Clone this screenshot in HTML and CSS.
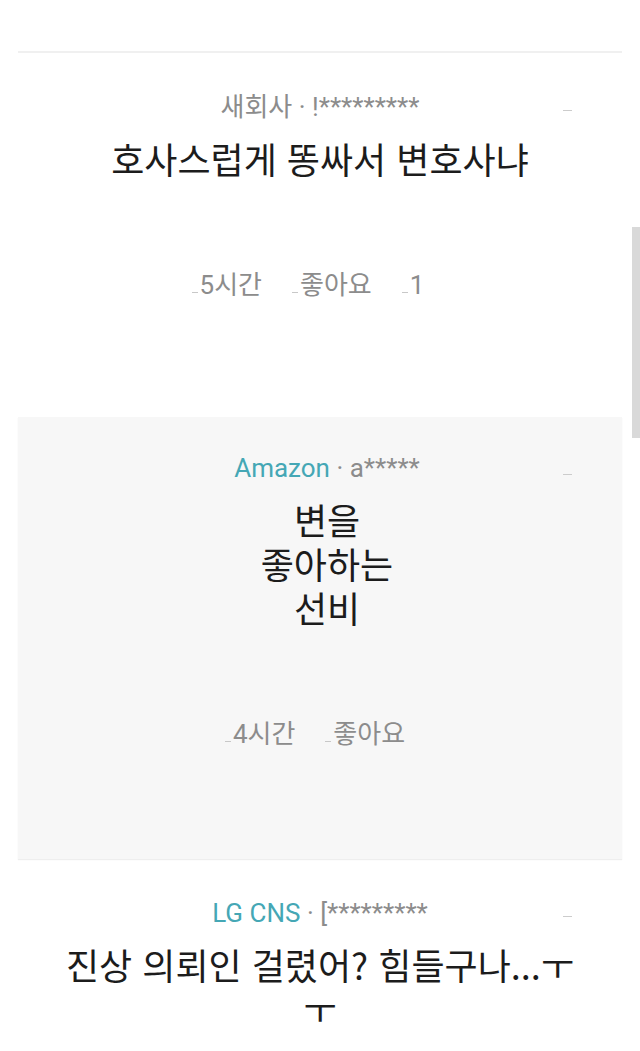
FILE: index.html
```html
<!DOCTYPE html>
<html lang="ko">
<head>
    <meta charset="UTF-8">
    <meta name="viewport" content="width=device-width, initial-scale=1.0">
    <title>댓글</title>
    <link rel="stylesheet" href="styles.css">
</head>
<body>
    <div class="scrollbar"></div>
    <div class="comments">
        <div class="comment">
            <div class="meta">
                <span>새회사</span> · !*********
                <span class="more"></span>
            </div>
            <p class="body">호사스럽게 똥싸서 변호사냐</p>
            <div class="actions">
                <span class="action"><i class="ico"></i>5시간</span>
                <span class="action"><i class="ico"></i>좋아요</span>
                <span class="action"><i class="ico"></i>1</span>
            </div>
        </div>

        <div class="comment comment--best">
            <div class="meta">
                <span class="company">Amazon</span> · a*****
                <span class="more"></span>
            </div>
            <p class="body">변을<br>좋아하는<br>선비</p>
            <div class="actions">
                <span class="action"><i class="ico"></i>4시간</span>
                <span class="action"><i class="ico"></i>좋아요</span>
            </div>
        </div>

        <div class="comment">
            <div class="meta">
                <span class="company">LG CNS</span> · [*********
                <span class="more"></span>
            </div>
            <p class="body">진상 의뢰인 걸렸어? 힘들구나...ㅜ<br>ㅜ</p>
        </div>
    </div>
</body>
</html>
```

FILE: styles.css
```css
body {
    margin: 0;
    padding: 0;
    background: #fff;
    font-family: Roboto, "Noto Sans CJK KR", sans-serif;
    color: #1c1c1c;
    overflow: hidden;
}
.comments {
    margin: 51px 18px 0;
    border-top: 2px solid #f0f0f0;
}
.comment {
    position: relative;
    padding: 39px 0 117px;
    text-align: center;
}
.comment--best {
    background: #f7f7f7;
    padding: 36px 0 110px 14px;
    box-shadow: 0 1px 1px #eee;
}
.meta {
    font-size: 26px;
    line-height: 30px;
    color: #8c8c8c;
}
.company {
    color: #45a7b5;
}
.more {
    position: absolute;
    right: 50px;
    top: 57px;
    width: 9px;
    height: 1px;
    background: #ccc;
}
.body {
    margin: 14px 0 0;
    font-family: "Noto Sans CJK KR", sans-serif;
    font-size: 36px;
    line-height: 44px;
    color: #1c1c1c;
}
.actions {
    margin-top: 90px;
    padding-right: 24px;
    display: flex;
    justify-content: center;
    gap: 30px;
    font-size: 26px;
    line-height: 30px;
    color: #8c8c8c;
}
.action {
    display: flex;
    align-items: center;
}
.ico {
    width: 6px;
    height: 1px;
    margin: 14px 2px 0 0;
    background: #c8c8c8;
}
.scrollbar {
    position: fixed;
    right: 0;
    top: 227px;
    width: 8px;
    height: 211px;
    background: #d9d9d9;
}
```
